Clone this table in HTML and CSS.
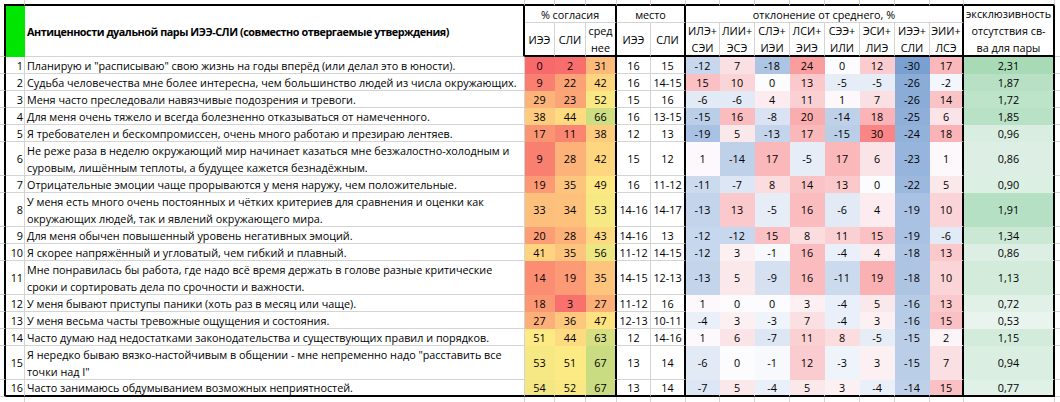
FILE: index.html
```html
<!DOCTYPE html>
<html lang="ru">
<head>
<meta charset="utf-8">
<title>Антиценности ИЭЭ-СЛИ</title>
<link rel="stylesheet" href="styles.css">
</head>
<body>
<div class="sheet">
<div class="c0"></div><div class="xt"></div><div class="xt"></div><div class="xt"></div><div class="xt"></div><div class="xt"></div><div class="xt"></div><div class="xt"></div><div class="xt"></div><div class="xt"></div><div class="xt"></div><div class="xt"></div><div class="xt"></div><div class="xt"></div><div class="xt"></div><div class="xt"></div><div class="xt"></div><div class="ce"></div>

<div class="xl r2"></div>
<div class="green r2"></div>
<div class="title r2 tr">Антиценности дуальной пары ИЭЭ-СЛИ (совместно отвергаемые утверждения)</div>
<div class="s3 tr">% согласия</div>
<div class="s2 tr">место</div>
<div class="s8 tr">отклонение от среднего, %</div>
<div class="r2 tr tb"><span>эксклюзивность<br>отсутствия св-<br>ва для пары</span></div>
<div class="xr r2"></div>

<div class="tb">ИЭЭ</div><div class="tb">СЛИ</div><div class="tb tr"><span>сред<br>нее</span></div>
<div class="tb">ИЭЭ</div><div class="tb tr">СЛИ</div>
<div class="tb"><span>ИЛЭ+<br>СЭИ</span></div><div class="tb"><span>ЛИИ+<br>ЭСЭ</span></div><div class="tb"><span>СЛЭ+<br>ИЭИ</span></div><div class="tb"><span>ЛСИ+<br>ЭИЭ</span></div><div class="tb"><span>СЭЭ+<br>ИЛИ</span></div><div class="tb"><span>ЭСИ+<br>ЛИЭ</span></div><div class="tb"><span>ИЭЭ+<br>СЛИ</span></div><div class="tb tr"><span>ЭИИ+<br>ЛСЭ</span></div>

<div class="xl"></div><div class="n">1</div><div class="t">Планирую и "расписываю" свою жизнь на годы вперёд (или делал это в юности).</div><div class="pa">0</div><div class="pa">2</div><div class="pm tr">31</div><div>16</div><div class="tr">15</div><div class="dv">-12</div><div class="dv">7</div><div class="dv">-18</div><div class="dv">24</div><div class="dv">0</div><div class="dv">12</div><div class="dv">-30</div><div class="dv tr">17</div><div class="ex tr">2,31</div><div class="xr"></div>

<div class="xl"></div><div class="n">2</div><div class="t">Судьба человечества мне более интересна, чем большинство людей из числа окружающих.</div><div class="pa">9</div><div class="pa">22</div><div class="pm tr">42</div><div>16</div><div class="tr">14-15</div><div class="dv">15</div><div class="dv">10</div><div class="dv">0</div><div class="dv">13</div><div class="dv">-5</div><div class="dv">-5</div><div class="dv">-26</div><div class="dv tr">-2</div><div class="ex tr">1,87</div><div class="xr"></div>

<div class="xl"></div><div class="n">3</div><div class="t">Меня часто преследовали навязчивые подозрения и тревоги.</div><div class="pa">29</div><div class="pa">23</div><div class="pm tr">52</div><div>15</div><div class="tr">16</div><div class="dv">-6</div><div class="dv">-6</div><div class="dv">4</div><div class="dv">11</div><div class="dv">1</div><div class="dv">7</div><div class="dv">-26</div><div class="dv tr">14</div><div class="ex tr">1,72</div><div class="xr"></div>

<div class="xl"></div><div class="n">4</div><div class="t">Для меня очень тяжело и всегда болезненно отказываться от намеченного.</div><div class="pa">38</div><div class="pa">44</div><div class="pm tr">66</div><div>16</div><div class="tr">13-15</div><div class="dv">-15</div><div class="dv">16</div><div class="dv">-8</div><div class="dv">20</div><div class="dv">-14</div><div class="dv">18</div><div class="dv">-25</div><div class="dv tr">6</div><div class="ex tr">1,85</div><div class="xr"></div>

<div class="xl"></div><div class="n">5</div><div class="t">Я требователен и бескомпромиссен, очень много работаю и презираю лентяев.</div><div class="pa">17</div><div class="pa">11</div><div class="pm tr">38</div><div>12</div><div class="tr">13</div><div class="dv">-19</div><div class="dv">5</div><div class="dv">-13</div><div class="dv">17</div><div class="dv">-15</div><div class="dv">30</div><div class="dv">-24</div><div class="dv tr">18</div><div class="ex tr">0,96</div><div class="xr"></div>

<div class="xl"></div><div class="n">6</div><div class="t"><span>Не реже раза в неделю окружающий мир начинает казаться мне безжалостно-холодным и<br>суровым, лишённым теплоты, а будущее кажется безнадёжным.</span></div><div class="pa">9</div><div class="pa">28</div><div class="pm tr">42</div><div>15</div><div class="tr">12</div><div class="dv">1</div><div class="dv">-14</div><div class="dv">17</div><div class="dv">-5</div><div class="dv">17</div><div class="dv">6</div><div class="dv">-23</div><div class="dv tr">1</div><div class="ex tr">0,86</div><div class="xr"></div>

<div class="xl"></div><div class="n">7</div><div class="t">Отрицательные эмоции чаще прорываются у меня наружу, чем положительные.</div><div class="pa">19</div><div class="pa">35</div><div class="pm tr">49</div><div>16</div><div class="tr">11-12</div><div class="dv">-11</div><div class="dv">-7</div><div class="dv">8</div><div class="dv">14</div><div class="dv">13</div><div class="dv">0</div><div class="dv">-22</div><div class="dv tr">5</div><div class="ex tr">0,90</div><div class="xr"></div>

<div class="xl"></div><div class="n">8</div><div class="t"><span>У меня есть много очень постоянных и чётких критериев для сравнения и оценки как<br>окружающих людей, так и явлений окружающего мира.</span></div><div class="pa">33</div><div class="pa">34</div><div class="pm tr">53</div><div>14-16</div><div class="tr">14-17</div><div class="dv">-13</div><div class="dv">13</div><div class="dv">-5</div><div class="dv">16</div><div class="dv">-6</div><div class="dv">4</div><div class="dv">-19</div><div class="dv tr">10</div><div class="ex tr">1,91</div><div class="xr"></div>

<div class="xl"></div><div class="n">9</div><div class="t">Для меня обычен повышенный уровень негативных эмоций.</div><div class="pa">20</div><div class="pa">28</div><div class="pm tr">43</div><div>14-16</div><div class="tr">13</div><div class="dv">-12</div><div class="dv">-12</div><div class="dv">15</div><div class="dv">8</div><div class="dv">11</div><div class="dv">15</div><div class="dv">-19</div><div class="dv tr">-6</div><div class="ex tr">1,34</div><div class="xr"></div>

<div class="xl"></div><div class="n">10</div><div class="t">Я скорее напряжённый и угловатый, чем гибкий и плавный.</div><div class="pa">41</div><div class="pa">35</div><div class="pm tr">56</div><div>11-12</div><div class="tr">14-15</div><div class="dv">-12</div><div class="dv">3</div><div class="dv">-1</div><div class="dv">16</div><div class="dv">-4</div><div class="dv">4</div><div class="dv">-18</div><div class="dv tr">13</div><div class="ex tr">0,86</div><div class="xr"></div>

<div class="xl"></div><div class="n">11</div><div class="t"><span>Мне понравилась бы работа, где надо всё время держать в голове разные критические<br>сроки и сортировать дела по срочности и важности.</span></div><div class="pa">14</div><div class="pa">19</div><div class="pm tr">35</div><div>14-15</div><div class="tr">12-13</div><div class="dv">-13</div><div class="dv">5</div><div class="dv">-9</div><div class="dv">16</div><div class="dv">-11</div><div class="dv">19</div><div class="dv">-18</div><div class="dv tr">10</div><div class="ex tr">1,13</div><div class="xr"></div>

<div class="xl"></div><div class="n">12</div><div class="t">У меня бывают приступы паники (хоть раз в месяц или чаще).</div><div class="pa">18</div><div class="pa">3</div><div class="pm tr">27</div><div>11-12</div><div class="tr">16</div><div class="dv">1</div><div class="dv">0</div><div class="dv">0</div><div class="dv">3</div><div class="dv">-4</div><div class="dv">5</div><div class="dv">-16</div><div class="dv tr">13</div><div class="ex tr">0,72</div><div class="xr"></div>

<div class="xl"></div><div class="n">13</div><div class="t">У меня весьма часты тревожные ощущения и состояния.</div><div class="pa">27</div><div class="pa">36</div><div class="pm tr">47</div><div>12-13</div><div class="tr">10-11</div><div class="dv">-4</div><div class="dv">3</div><div class="dv">-3</div><div class="dv">7</div><div class="dv">-4</div><div class="dv">3</div><div class="dv">-16</div><div class="dv tr">15</div><div class="ex tr">0,53</div><div class="xr"></div>

<div class="xl"></div><div class="n">14</div><div class="t">Часто думаю над недостатками законодательства и существующих правил и порядков.</div><div class="pa">51</div><div class="pa">44</div><div class="pm tr">63</div><div>12</div><div class="tr">14-16</div><div class="dv">1</div><div class="dv">6</div><div class="dv">-7</div><div class="dv">11</div><div class="dv">8</div><div class="dv">-5</div><div class="dv">-15</div><div class="dv tr">2</div><div class="ex tr">1,15</div><div class="xr"></div>

<div class="xl"></div><div class="n">15</div><div class="t"><span>Я нередко бываю вязко-настойчивым в общении - мне непременно надо "расставить все<br>точки над I"</span></div><div class="pa">53</div><div class="pa">51</div><div class="pm tr">67</div><div>13</div><div class="tr">14</div><div class="dv">-6</div><div class="dv">0</div><div class="dv">-1</div><div class="dv">12</div><div class="dv">-3</div><div class="dv">3</div><div class="dv">-15</div><div class="dv tr">7</div><div class="ex tr">0,94</div><div class="xr"></div>

<div class="xl"></div><div class="n tb">16</div><div class="t tb">Часто занимаюсь обдумыванием возможных неприятностей.</div><div class="pa tb">54</div><div class="pa tb">52</div><div class="pm tr tb">67</div><div class="tb">13</div><div class="tr tb">14</div><div class="dv tb">-7</div><div class="dv tb">5</div><div class="dv tb">-4</div><div class="dv tb">5</div><div class="dv tb">3</div><div class="dv tb">-4</div><div class="dv tb">-14</div><div class="dv tr tb">15</div><div class="ex tr tb">0,77</div><div class="xr"></div>

<div class="ce"></div><div class="xb"></div><div class="xb"></div><div class="xb"></div><div class="xb"></div><div class="xb"></div><div class="xb"></div><div class="xb"></div><div class="xb"></div><div class="xb"></div><div class="xb"></div><div class="xb"></div><div class="xb"></div><div class="xb"></div><div class="xb"></div><div class="xb"></div><div class="xb"></div><div class="ce"></div>
</div>
<script src="script.js"></script>
</body>
</html>
```

FILE: styles.css
```css
html, body {
  margin: 0;
  padding: 0;
  background: #ffffff;
}

body {
  font-family: "Open Sans", "DejaVu Sans", sans-serif;
  font-size: 10.8px;
  color: #000000;
}

.sheet {
  display: grid;
  grid-template-columns: 6px 19px 500px 30px 31px 31px 34px 35px 34px 35px 35px 35px 35px 35px 35px 34px 91px 5px;
  grid-template-rows: 6px 17px 34px 17px 17px 17px 17px 17px 34px 17px 34px 17px 17px 34px 17px 17px 17px 34px 17px 5px;
  width: 1060px;
  height: 402px;
  overflow: hidden;
}

.sheet > * {
  box-sizing: border-box;
  border-right: 1px solid #d4d4d4;
  border-bottom: 1px solid #d4d4d4;
  display: flex;
  align-items: center;
  justify-content: center;
  text-align: center;
  line-height: 17px;
  white-space: nowrap;
  overflow: hidden;
  min-width: 0;
}

.s2 { grid-column: span 2; }
.s3 { grid-column: span 3; }
.s8 { grid-column: span 8; }
.r2 { grid-row: span 2; }

.c0 {
  border: 0;
  background: linear-gradient(#000, #000) right bottom / 2px 2px no-repeat;
}
.ce { border: 0; }
.xt { border-bottom: 2px solid #000; }
.xl { border-right: 2px solid #000; }
.xr { border-right: 0; }
.xb { border-bottom: 0; }

.green {
  background: #00e600;
  border-color: transparent;
}

.title {
  font-weight: 700;
  letter-spacing: -0.45px;
  justify-content: flex-start;
  padding-left: 2px;
}

.n {
  justify-content: flex-end;
  padding-right: 1px;
}

.t {
  justify-content: flex-start;
  text-align: left;
  padding-left: 2px;
}

.pa, .pm, .dv, .ex {
  border-right-color: transparent;
  border-bottom-color: transparent;
}

.tr { border-right: 2px solid #000; }
.tb { border-bottom: 2px solid #000; }
```

FILE: script.js
```js
(function () {
  var RED = [248, 105, 107];
  var YEL = [255, 235, 132];
  var GRN = [99, 190, 123];
  var WHT = [252, 252, 255];
  var BLU = [90, 138, 198];

  function mix(a, b, t) {
    t = Math.max(0, Math.min(1, t));
    return 'rgb(' + a.map(function (v, i) {
      return Math.round(v + (b[i] - v) * t);
    }).join(',') + ')';
  }

  function num(cell) {
    return parseFloat(cell.textContent.replace(',', '.'));
  }

  document.querySelectorAll('.pa, .pm').forEach(function (c) {
    var v = num(c);
    c.style.backgroundColor = v <= 50 ? mix(RED, YEL, v / 50) : mix(YEL, GRN, (v - 50) / 50);
  });

  document.querySelectorAll('.dv').forEach(function (c) {
    var v = num(c);
    c.style.backgroundColor = v < 0 ? mix(WHT, BLU, -v / 37) : mix(WHT, RED, v / 37);
  });

  document.querySelectorAll('.ex').forEach(function (c) {
    c.style.backgroundColor = mix(WHT, GRN, num(c) / 4.2);
  });
})();
```
